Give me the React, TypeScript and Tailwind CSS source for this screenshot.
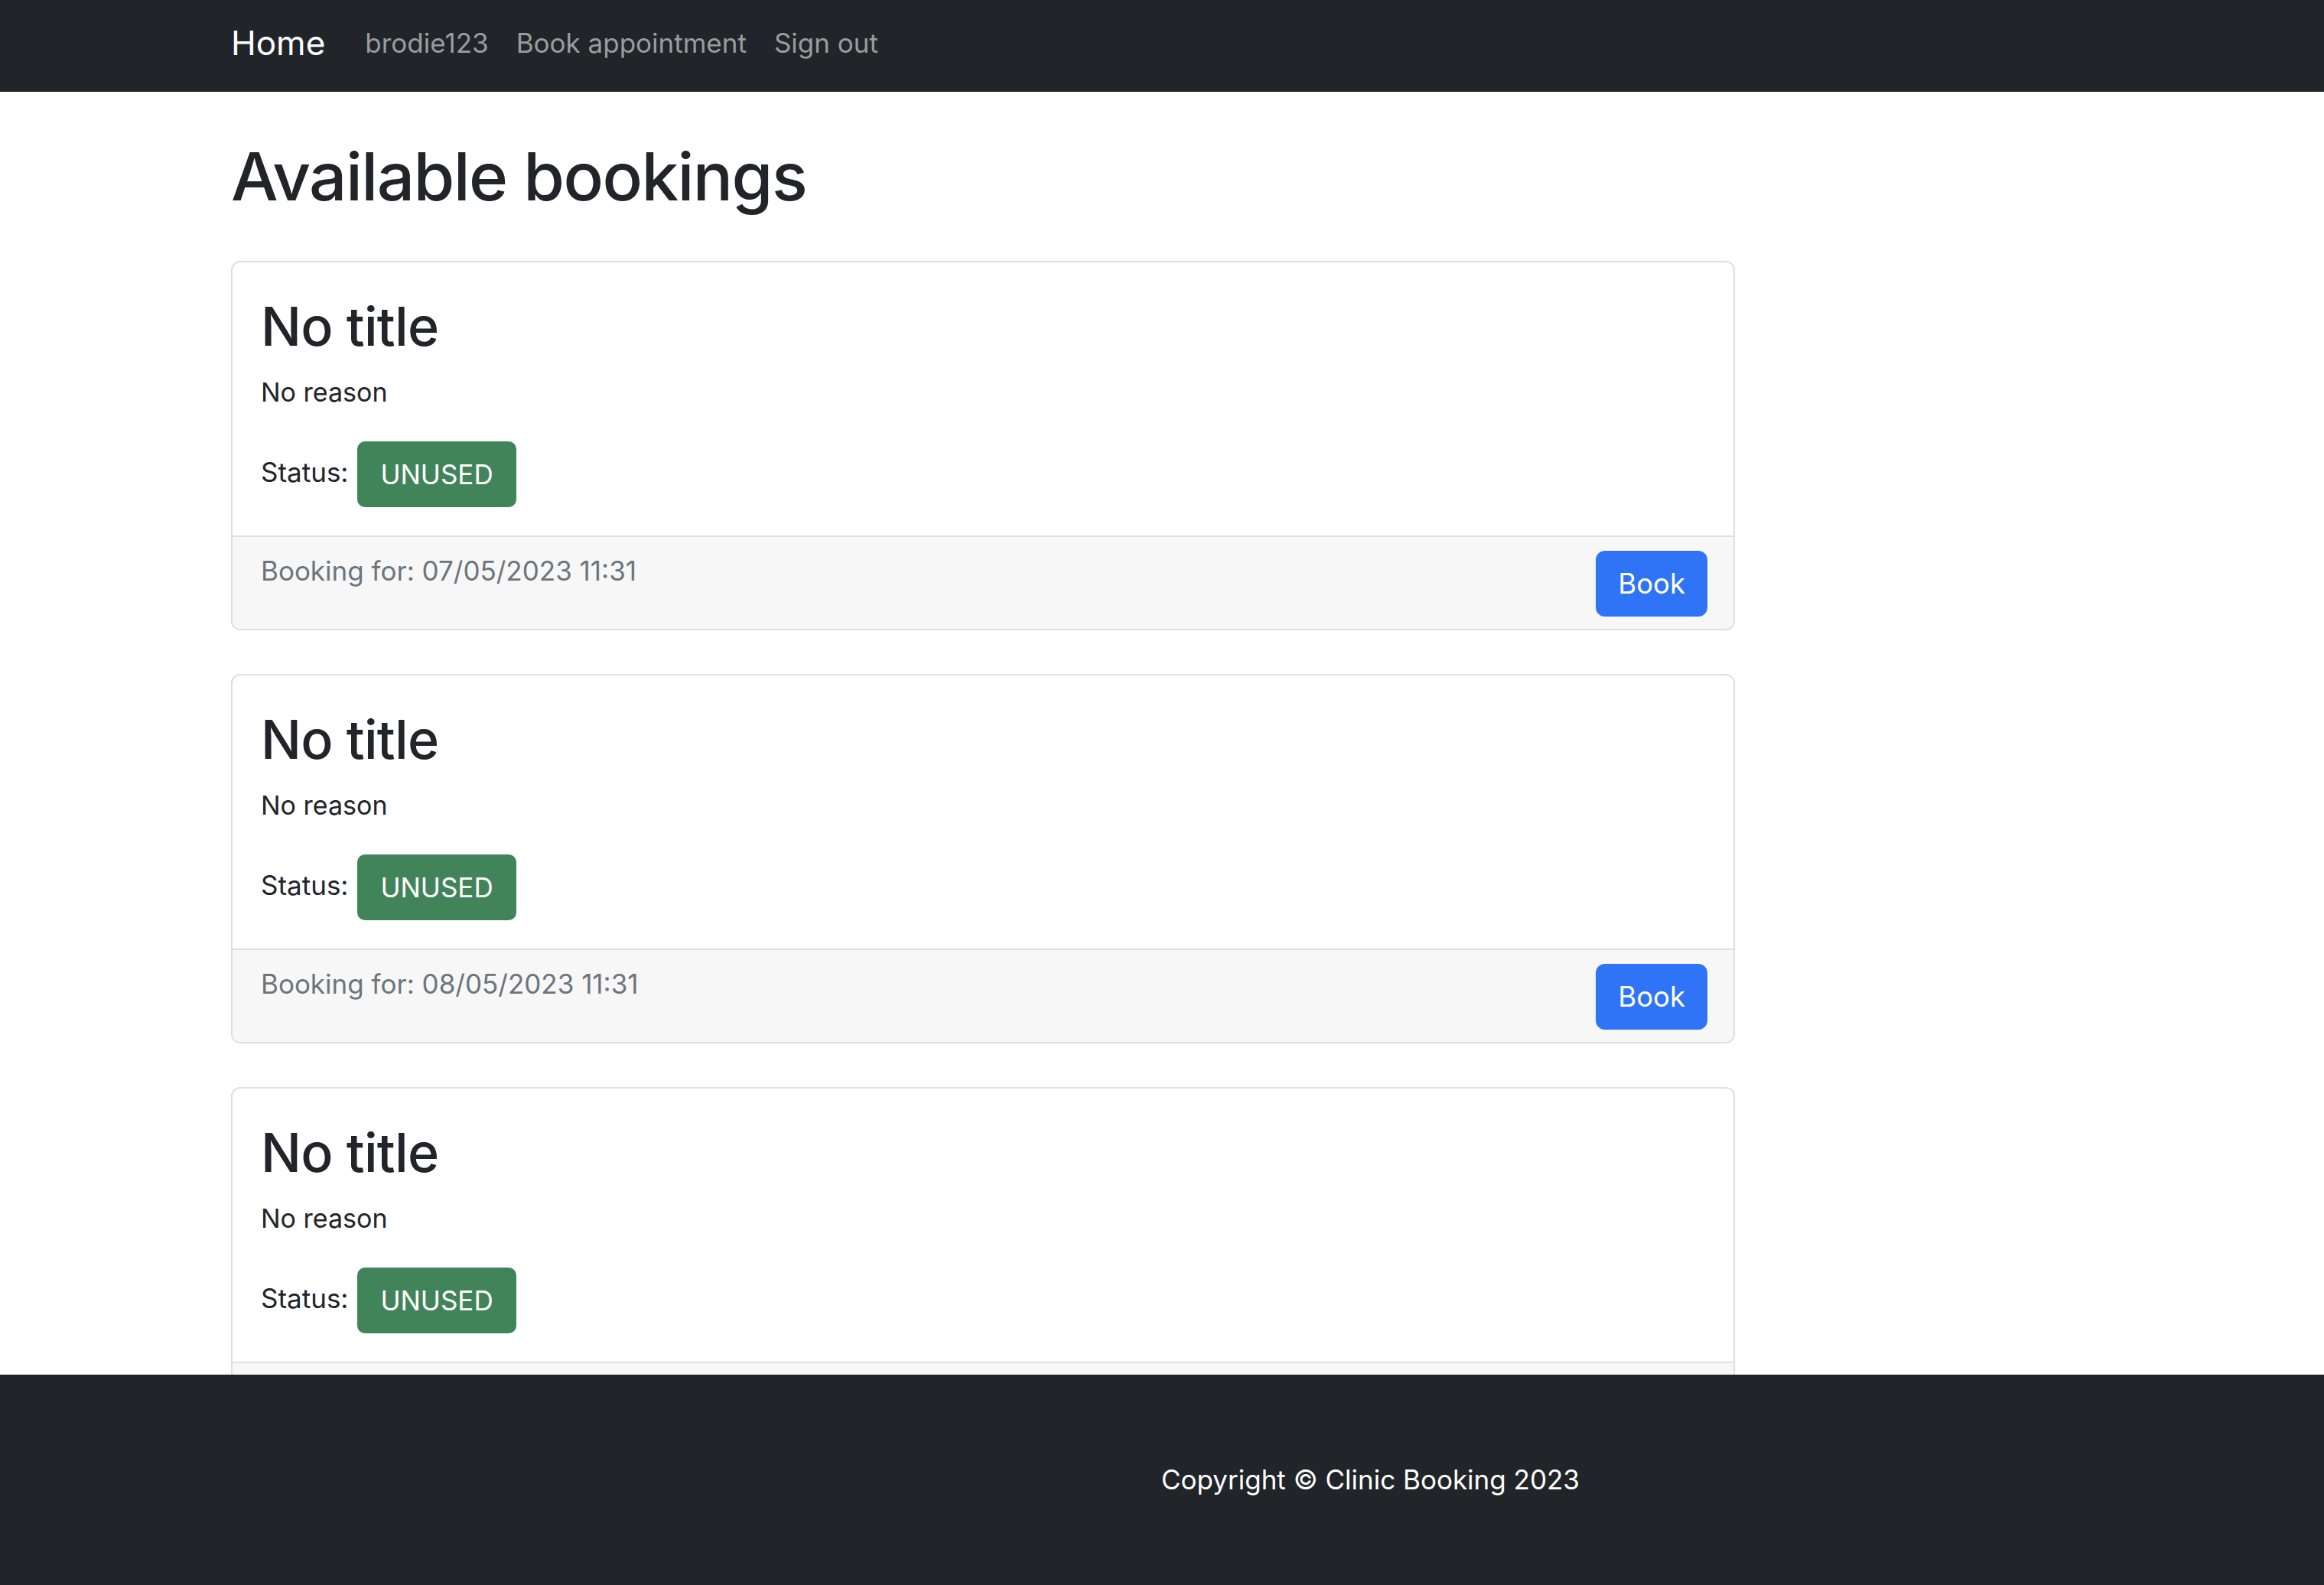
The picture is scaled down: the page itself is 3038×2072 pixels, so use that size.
const bookings = [
    { id: 1, date: "07/05/2023 11:31" },
    { id: 2, date: "08/05/2023 11:31" },
    { id: 3, date: "09/05/2023 11:31" },
];

function NavBar() {
    return (
        <nav className="bg-[#212529] h-[120px] shrink-0 flex items-center pb-2">
            <div className="ml-[302px] flex items-center">
                <a className="text-white text-[44px] leading-[56px] mr-[52px]">Home</a>
                <div className="flex items-center gap-[36px] text-[35px] leading-[48px] text-[#9a9c9e] -mt-[1px]">
                    <a>brodie123</a>
                    <a>Book appointment</a>
                    <a>Sign out</a>
                </div>
            </div>
        </nav>
    );
}

function BookingCard({ date }: { date: string }) {
    return (
        <div className="border-2 border-[#dfdfdf] rounded-[12px] bg-white overflow-hidden">
            <div className="px-[37px] pt-[40px] pb-[37px]">
                <h2 className="text-[70px] leading-[88px] font-medium tracking-[-0.01em] text-[#212529]">No title</h2>
                <p className="mt-[18px] text-[34px] leading-[48px] text-[#212529]">No reason</p>
                <div className="mt-[40px] flex items-center gap-[12px]">
                    <span className="text-[35px] leading-[48px] text-[#212529] -mt-[6px]">Status:</span>
                    <span className="h-[86px] px-[30px] flex items-center bg-[#41845a] text-white text-[35px] rounded-[10px]">
                        UNUSED
                    </span>
                </div>
            </div>
            <div className="border-t-2 border-[#dfdfdf] bg-[#f7f7f7] h-[122px] pl-[37px] pr-[34px] pt-[18px] flex justify-between items-start">
                <span className="mt-[6px] text-[35px] leading-[40px] text-[#6c757d]">Booking for: {date}</span>
                <button className="h-[86px] px-[29px] rounded-[12px] bg-[#2f73f6] text-white text-[36.5px]">Book</button>
            </div>
        </div>
    );
}

export default function App() {
    return (
        <div className="h-screen flex flex-col overflow-hidden bg-white font-['Inter',sans-serif]">
            <NavBar />
            <main className="flex-1 overflow-hidden">
                <div className="ml-[302px] w-[1966px]">
                    <h1 className="mt-[56px] text-[87px] leading-[110px] font-medium tracking-[-0.018em] text-[#212529]">Available bookings</h1>
                    <div className="mt-[55px] flex flex-col gap-[57px]">
                        {bookings.map((b) => (
                            <BookingCard key={b.id} date={b.date} />
                        ))}
                    </div>
                </div>
            </main>
            <footer className="bg-[#212529] h-[275px] shrink-0 flex items-center justify-center pl-[545px]">
                <p className="text-white text-[35px]">Copyright © Clinic Booking 2023</p>
            </footer>
        </div>
    );
}
